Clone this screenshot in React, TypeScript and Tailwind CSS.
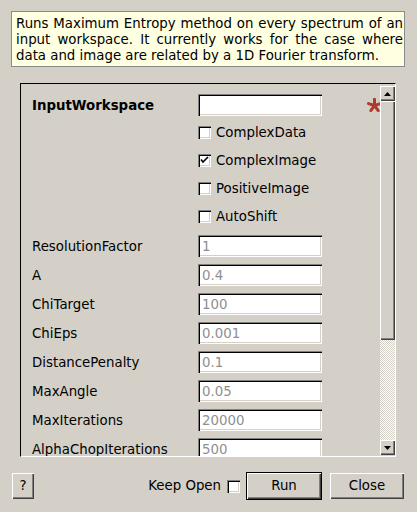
const raised =
  'bg-[#d4d0c8] shadow-[inset_1px_1px_#ffffff,inset_-1px_-1px_#404040,inset_-2px_-2px_#808080]';
const sunken =
  'bg-white shadow-[inset_1px_1px_#808080,inset_2px_2px_#000000,inset_-1px_-1px_#ffffff,inset_-2px_-2px_#d4d0c8]';

type Row = { label: string; value: string };

const rows: Row[] = [
  { label: 'ResolutionFactor', value: '1' },
  { label: 'A', value: '0.4' },
  { label: 'ChiTarget', value: '100' },
  { label: 'ChiEps', value: '0.001' },
  { label: 'DistancePenalty', value: '0.1' },
  { label: 'MaxAngle', value: '0.05' },
  { label: 'MaxIterations', value: '20000' },
  { label: 'AlphaChopIterations', value: '500' },
];

const checks = [
  { label: 'ComplexData', checked: false },
  { label: 'ComplexImage', checked: true },
  { label: 'PositiveImage', checked: false },
  { label: 'AutoShift', checked: false },
];

const CheckBox = ({ checked = false }: { checked?: boolean }) => (
  <div className={`relative h-[13px] w-[13px] shrink-0 ${sunken}`}>
    {checked && (
      <svg className="absolute left-0 top-0" width="13" height="13" viewBox="0 0 13 13">
        <path d="M3 5.5 L5 8 L10 3" fill="none" stroke="#000" strokeWidth="1.6" />
      </svg>
    )}
  </div>
);

const Field = ({ value }: { value?: string }) => (
  <div className={`flex h-[22px] w-[124px] shrink-0 items-center pl-[4px] pt-[1px] text-[#8f8f8f] ${sunken}`}>
    {value}
  </div>
);

const Arrow = ({ down = false }: { down?: boolean }) => (
  <svg width="7" height="4" viewBox="0 0 7 4">
    <path d={down ? 'M0 0 L7 0 L3.5 4 Z' : 'M0 4 L7 4 L3.5 0 Z'} fill="#000" />
  </svg>
);

const Asterisk = () => (
  <svg className="absolute left-[346px] top-[14px]" width="15" height="15" viewBox="0 0 15 15">
    {[-90, -18, 54, 126, 198].map((a) => (
      <line
        key={a}
        x1="7.5"
        y1="7.5"
        x2={7.5 + 6.3 * Math.cos((a * Math.PI) / 180)}
        y2={7.5 + 6.3 * Math.sin((a * Math.PI) / 180)}
        stroke="#b03a2e"
        strokeWidth="3"
        strokeLinecap="round"
      />
    ))}
  </svg>
);

export default function App() {
  return (
    <div className="flex h-[512px] w-[417px] flex-col overflow-hidden bg-[#d4d0c8] px-[11px] font-['DejaVu_Sans',sans-serif] text-[13.33px] text-black">
      <div className="mt-[11px] h-[56px] w-[394px] border border-[#8a8a8a] bg-[#ffffe1] pl-[4px] pr-[1px] pt-[4px] text-justify leading-[16px]">
        Runs Maximum Entropy method on every spectrum of an input workspace. It currently works for
        the case where data and image are related by a 1D Fourier transform.
      </div>

      <div className="ml-[9px] mt-[16px] flex h-[374px] w-[376px] border-b border-l border-r border-t border-b-white border-l-black border-r-white border-t-black">
        <div className="relative flex-1 overflow-hidden pl-[11px] pt-[10px]">
          <div className="flex h-[22px] items-center">
            <div className="w-[166px] pt-[1px] font-bold">InputWorkspace</div>
            <div className={`h-[22px] w-[124px] ${sunken}`} />
          </div>
          <Asterisk />

          <div className="mt-[2px] flex flex-col">
            {checks.map((c) => (
              <div key={c.label} className="flex h-[28px] items-center gap-[5px] pl-[166px]">
                <CheckBox checked={c.checked} />
                <span className="pt-[1px]">{c.label}</span>
              </div>
            ))}
          </div>

          <div className="mt-[5px] flex flex-col gap-[7px]">
            {rows.map((r) => (
              <div key={r.label} className="flex h-[22px] items-center">
                <div className="w-[166px] shrink-0 pt-[1px]">{r.label}</div>
                <Field value={r.value} />
              </div>
            ))}
          </div>
        </div>

        <div className="flex w-[15px] flex-col pb-[1px] pt-[2px]">
          <div className={`flex h-[15px] items-center justify-center ${raised}`}>
            <Arrow />
          </div>
          <div className={`h-[239px] ${raised}`} />
          <div className="flex-1 bg-[repeating-conic-gradient(#ffffff_0_25%,#d4d0c8_0_50%)] bg-[length:2px_2px]" />
          <div className={`flex h-[15px] items-center justify-center ${raised}`}>
            <Arrow down />
          </div>
        </div>
      </div>

      <div className="mt-[15px] flex h-[28px] items-center justify-between pl-[1px] pr-[2px]">
        <div className={`flex h-[26px] w-[22px] items-center justify-center ${raised}`}>?</div>
        <div className="flex items-center">
          <span>Keep Open</span>
          <div className="ml-[6px]">
            <CheckBox />
          </div>
          <div className="ml-[6px] h-[28px] w-[76px] border border-black">
            <div className={`flex h-full w-full items-center justify-center ${raised}`}>Run</div>
          </div>
          <div className={`ml-[8px] flex h-[26px] w-[74px] items-center justify-center ${raised}`}>
            Close
          </div>
        </div>
      </div>
    </div>
  );
}
